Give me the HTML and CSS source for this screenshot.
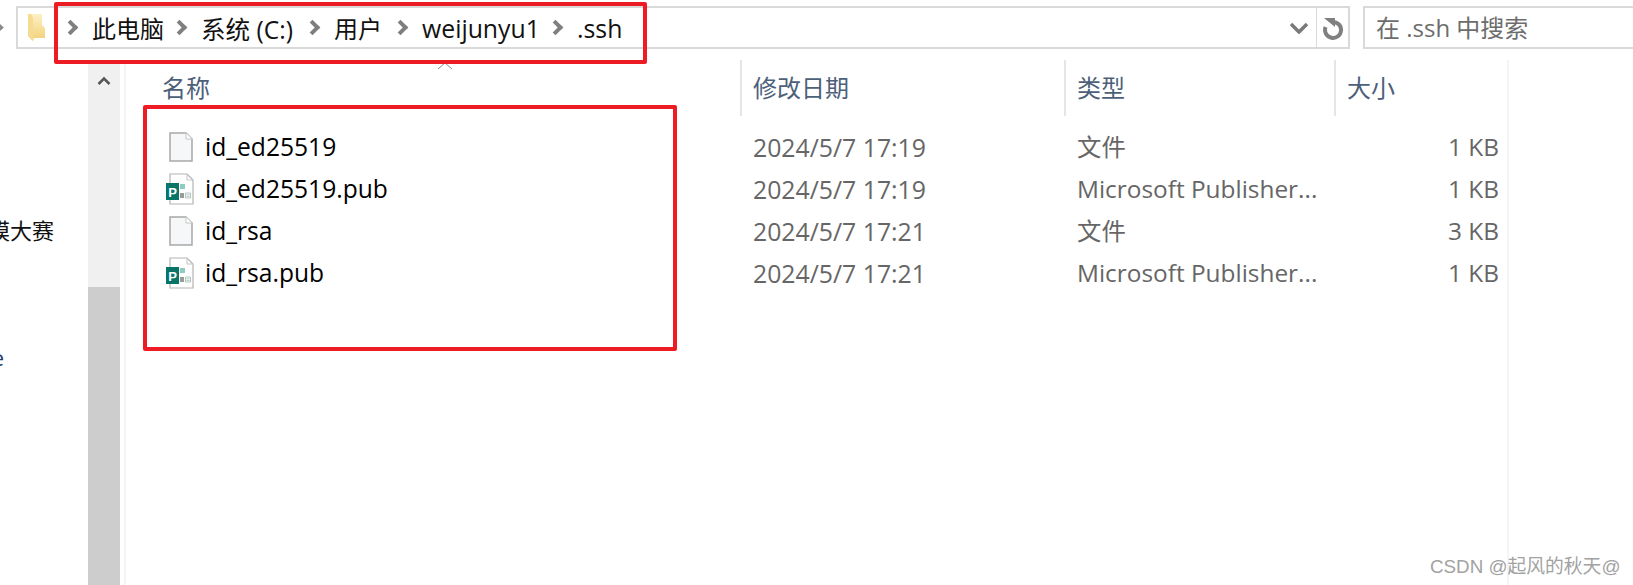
FILE: index.html
```html
<!DOCTYPE html>
<html lang="zh-CN">

<head>
    <meta charset="utf-8">
    <title>.ssh</title>
    <link rel="stylesheet" href="styles.css">
</head>

<body>
    <div class="toolbar">
        <svg class="back-arrow" width="16" height="43" viewBox="0 0 16 43">
            <path d="M-3 17 L2 21.500 L-3 26" fill="none" stroke="#8a8a8a" stroke-width="2.500" />
        </svg>
        <div class="address">
            <svg class="folder" width="18" height="27" viewBox="0 0 18 27">
                <defs>
                    <linearGradient id="folderFill" x1="0" y1="0" x2="0" y2="1">
                        <stop offset="0" stop-color="#fdf0c4" />
                        <stop offset="1" stop-color="#f3d077" />
                    </linearGradient>
                </defs>
                <path d="M0 0 H14 V11 L17 14 V24 H6 L5 27 L0 22 Z" fill="url(#folderFill)" />
                <path d="M0 0 H3 L5 4 V27 L0 22 Z" fill="#f6dc92" />
            </svg>
            <div class="crumbs">
                <span class="sep"></span><span class="crumb w-pc">此电脑</span>
                <span class="sep"></span><span class="crumb w-c">系统 (C:)</span>
                <span class="sep"></span><span class="crumb w-user">用户</span>
                <span class="sep"></span><span class="crumb w-name">weijunyu1</span>
                <span class="sep"></span><span class="crumb">.ssh</span>
            </div>
            <svg class="drop" width="20" height="12" viewBox="0 0 20 12">
                <path d="M2 2 L10 10 L18 2" fill="none" stroke="#7a7a7a" stroke-width="3.500" />
            </svg>
        </div>
        <div class="refresh">
            <svg width="24" height="24" viewBox="0 0 24 24">
                <path d="M11 6 A8 8 0 1 1 4.600 11" fill="none" stroke="#808080" stroke-width="4" />
                <path d="M3 2 L14 2 L14 11 Z" fill="#808080" />
            </svg>
        </div>
        <div class="search">在 .ssh 中搜索</div>
    </div>

    <div class="content">
        <div class="sidebar">
            <div class="side-item">模大赛</div>
            <div class="side-item side-last">e</div>
        </div>
        <div class="scrollbar">
            <svg class="scroll-up" width="14" height="10" viewBox="0 0 14 10">
                <path d="M1.500 8 L7 2.500 L12.500 8" fill="none" stroke="#555" stroke-width="2.500" />
            </svg>
            <div class="thumb"></div>
        </div>
        <div class="list">
            <div class="cols head">
                <div class="head-cell">名称</div>
                <div class="head-cell">修改日期</div>
                <div class="head-cell">类型</div>
                <div class="head-cell">大小</div>
            </div>
            <svg class="sort" width="16" height="8" viewBox="0 0 16 8">
                <path d="M1 7 L8 1 L15 7" fill="none" stroke="#8a8a8a" stroke-width="1" />
            </svg>
            <div class="rows">
                <div class="cols row">
                    <div class="name">
                        <svg class="icon" width="28" height="32" viewBox="0 0 28 32">
                            <path d="M4 2 H20 L26 8 V30 H4 Z" fill="#f6f7f8" stroke="#a8a8a8" stroke-width="1.500" />
                            <path d="M20 2 V8 H26" fill="#fff" stroke="#c4c4c4" />
                        </svg>
                        <span>id_ed25519</span>
                    </div>
                    <div class="date">2024/5/7 17:19</div>
                    <div class="type">文件</div>
                    <div class="size">1 KB</div>
                </div>
                <div class="cols row">
                    <div class="name">
                        <svg class="icon" width="28" height="32" viewBox="0 0 28 32">
                            <path d="M4 1 H21 L27 7 V31 H4 Z" fill="#fff" stroke="#b4b4b4" stroke-width="1.200" />
                            <path d="M21 1 V7 H27" fill="none" stroke="#c4c4c4" />
                            <rect x="14" y="11" width="5" height="5" fill="#8fcbbf" />
                            <rect x="14" y="20" width="4" height="5" fill="#9a9a9a" />
                            <path d="M19.500 20 H24.500 V25 H19.500 Z M20.500 21.800 H23.500 M20.500 23.400 H23.500" fill="#fff" stroke="#8fb0a8" stroke-width="0.700" />
                            <rect x="0" y="10" width="13" height="17" fill="#077568" />
                            <text class="pub-letter" x="6.500" y="23.500">P</text>
                        </svg>
                        <span>id_ed25519.pub</span>
                    </div>
                    <div class="date">2024/5/7 17:19</div>
                    <div class="type">Microsoft Publisher...</div>
                    <div class="size">1 KB</div>
                </div>
                <div class="cols row">
                    <div class="name">
                        <svg class="icon" width="28" height="32" viewBox="0 0 28 32">
                            <path d="M4 2 H20 L26 8 V30 H4 Z" fill="#f6f7f8" stroke="#a8a8a8" stroke-width="1.500" />
                            <path d="M20 2 V8 H26" fill="#fff" stroke="#c4c4c4" />
                        </svg>
                        <span>id_rsa</span>
                    </div>
                    <div class="date">2024/5/7 17:21</div>
                    <div class="type">文件</div>
                    <div class="size">3 KB</div>
                </div>
                <div class="cols row">
                    <div class="name">
                        <svg class="icon" width="28" height="32" viewBox="0 0 28 32">
                            <path d="M4 1 H21 L27 7 V31 H4 Z" fill="#fff" stroke="#b4b4b4" stroke-width="1.200" />
                            <path d="M21 1 V7 H27" fill="none" stroke="#c4c4c4" />
                            <rect x="14" y="11" width="5" height="5" fill="#8fcbbf" />
                            <rect x="14" y="20" width="4" height="5" fill="#9a9a9a" />
                            <path d="M19.500 20 H24.500 V25 H19.500 Z M20.500 21.800 H23.500 M20.500 23.400 H23.500" fill="#fff" stroke="#8fb0a8" stroke-width="0.700" />
                            <rect x="0" y="10" width="13" height="17" fill="#077568" />
                            <text class="pub-letter" x="6.500" y="23.500">P</text>
                        </svg>
                        <span>id_rsa.pub</span>
                    </div>
                    <div class="date">2024/5/7 17:21</div>
                    <div class="type">Microsoft Publisher...</div>
                    <div class="size">1 KB</div>
                </div>
            </div>
        </div>
    </div>

    <!-- hand-drawn annotations over the window -->
    <div class="mark mark-path"></div>
    <div class="mark mark-files"></div>
    <div class="watermark">CSDN @起风的秋天@</div>
</body>

</html>
```

FILE: styles.css
```css
html,
body {
    margin: 0;
    background: #fff;
}

body {
    position: relative;
    width: 1633px;
    height: 585px;
    overflow: hidden;
    font-family: "Open Sans", "Noto Sans CJK SC", sans-serif;
    font-size: 24px;
    color: #111;
}

.toolbar {
    display: flex;
    height: 43px;
    padding-top: 6px;
}

.back-arrow {
    flex: none;
}

.address {
    display: flex;
    align-items: center;
    box-sizing: border-box;
    width: 1301px;
    border: 2px solid #d9d9d9;
    border-right: 1px solid #d9d9d9;
    padding-left: 10px;
}

.folder {
    flex: none;
}

.crumbs {
    display: flex;
    align-items: center;
    flex: 1;
    margin-left: 20px;
    white-space: nowrap;
}

.sep {
    flex: none;
    box-sizing: border-box;
    width: 11px;
    height: 11px;
    margin-right: 15px;
    border-top: 4px solid #7f7f7f;
    border-right: 4px solid #7f7f7f;
    transform: translateX(-1px) rotate(45deg);
}

.crumb {
    font-size: 24.800px;
}

.w-pc {
    width: 72px;
    margin-right: 11px;
    font-size: 24px;
}

.w-c {
    width: 94px;
    margin-right: 13px;
    font-size: 24.600px;
}

.w-user {
    width: 49px;
    margin-right: 13px;
    font-size: 24px;
}

.w-name {
    width: 115px;
    margin-right: 14px;
}

.drop {
    flex: none;
    margin-right: 7px;
}

.refresh {
    display: flex;
    align-items: center;
    justify-content: center;
    box-sizing: border-box;
    width: 33px;
    border: 2px solid #d9d9d9;
    border-left: none;
}

.search {
    flex: 1;
    box-sizing: border-box;
    margin-left: 13px;
    border: 2px solid #d9d9d9;
    border-right: none;
    padding-left: 11px;
    line-height: 39px;
    color: #6d6d6d;
}

.content {
    display: flex;
    height: 525px;
    margin-top: 11px;
}

.sidebar {
    flex: none;
    box-sizing: border-box;
    width: 54px;
    margin-right: 34px;
    padding-top: 155px;
    overflow: hidden;
    font-size: 22px;
}

.side-item {
    display: flex;
    justify-content: flex-end;
    white-space: nowrap;
    line-height: 30px;
}

.side-last {
    position: relative;
    left: -50px;
    margin-top: 97px;
    color: #1c3a6e;
}

.scrollbar {
    display: flex;
    flex-direction: column;
    align-items: center;
    flex: none;
    width: 32px;
    margin-right: 4px;
    background: #f0f0f0;
}

.scroll-up {
    margin-top: 16px;
}

.thumb {
    width: 100%;
    height: 298px;
    margin-top: auto;
    background: #cdcdcd;
}

.list {
    position: relative;
    box-sizing: border-box;
    width: 1385px;
    border-left: 2px solid #f5f5f5;
    border-right: 2px solid #f4f4f4;
}

.cols {
    display: grid;
    grid-template-columns: 614px 324px 270px 174px;
}

.head {
    height: 48px;
}

.head-cell {
    border-left: 2px solid #e6e6e6;
    padding-left: 11px;
    line-height: 56px;
    color: #4c607a;
}

.head-cell:first-child {
    border-left: none;
    padding-left: 36px;
}

.sort {
    position: absolute;
    top: 2px;
    left: 311px;
}

.rows {
    margin-top: 17px;
}

.row {
    height: 42px;
    font-size: 24.400px;
    line-height: 44px;
}

.name {
    display: flex;
    align-items: center;
    padding-left: 40px;
    font-size: 24.600px;
    color: #000;
    white-space: nowrap;
}

.icon {
    flex: none;
    margin-right: 11px;
}

.pub-letter {
    font-family: "Liberation Sans", sans-serif;
    font-size: 13px;
    font-weight: 700;
    text-anchor: middle;
    fill: #fff;
}

.date,
.type,
.size {
    color: #666;
}

.date {
    font-size: 24.800px;
}

.date,
.type {
    padding-left: 13px;
}

.size {
    padding-right: 9px;
    text-align: right;
}

.mark {
    position: absolute;
    box-sizing: border-box;
    border: 4px solid #ed1c24;
    border-radius: 2px;
}

.mark-path {
    top: 2px;
    left: 54px;
    width: 593px;
    height: 62px;
}

.mark-files {
    top: 105px;
    left: 143px;
    width: 534px;
    height: 246px;
}

.watermark {
    position: absolute;
    top: 555px;
    left: 1430px;
    font-family: "Liberation Sans", "Noto Sans CJK SC", sans-serif;
    font-size: 18.800px;
    line-height: 24px;
    color: #a2a2a2;
}
```
